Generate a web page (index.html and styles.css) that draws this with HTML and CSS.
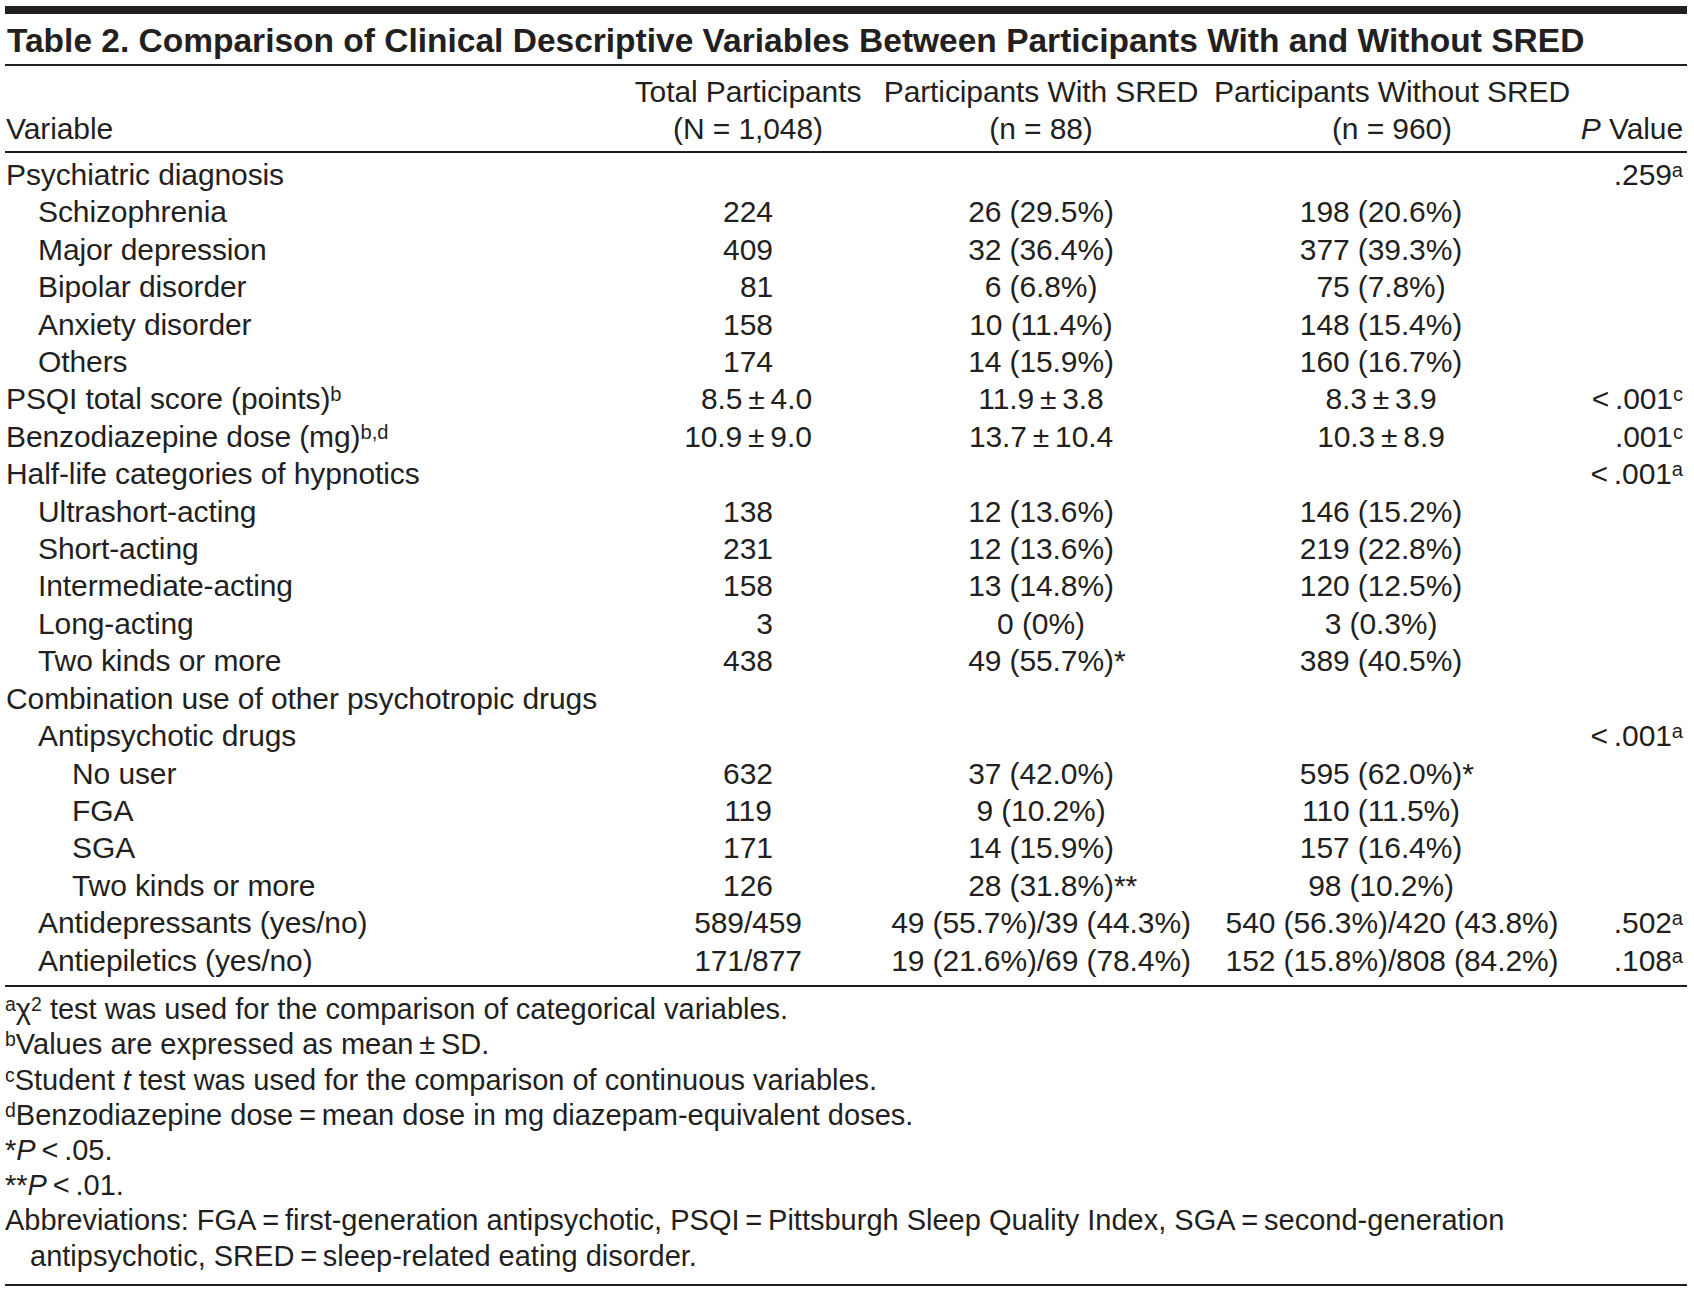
FILE: index.html
```html
<!DOCTYPE html>
<html lang="en">
<head>
<meta charset="utf-8">
<title>Table 2</title>
<link rel="stylesheet" href="styles.css">
</head>
<body>
<div class="page">
  <h1 class="title">Table 2. Comparison of Clinical Descriptive Variables Between Participants With and Without SRED</h1>
  <table class="data">
    <colgroup>
      <col class="w1"><col class="w2"><col class="w3"><col class="w4"><col class="w5">
    </colgroup>
    <thead>
      <tr>
        <th class="c1">Variable</th>
        <th>Total Participants<br>(N = 1,048)</th>
        <th>Participants With SRED<br>(n = 88)</th>
        <th>Participants Without SRED<br>(n = 960)</th>
        <th class="c5"><i>P</i> Value</th>
      </tr>
    </thead>
    <tbody>
      <tr><td class="c1">Psychiatric diagnosis</td><td></td><td></td><td></td><td class="c5">.259<sup>a</sup></td></tr>
      <tr><td class="c1 l1">Schizophrenia</td><td>224</td><td>26 (29.5%)</td><td class="s4">198 (20.6%)</td><td class="c5"></td></tr>
      <tr><td class="c1 l1">Major depression</td><td>409</td><td>32 (36.4%)</td><td class="s4">377 (39.3%)</td><td class="c5"></td></tr>
      <tr><td class="c1 l1">Bipolar disorder</td><td class="p1">81</td><td>6 (6.8%)</td><td class="s4">75 (7.8%)</td><td class="c5"></td></tr>
      <tr><td class="c1 l1">Anxiety disorder</td><td>158</td><td>10 (11.4%)</td><td class="s4">148 (15.4%)</td><td class="c5"></td></tr>
      <tr><td class="c1 l1">Others</td><td>174</td><td>14 (15.9%)</td><td class="s4">160 (16.7%)</td><td class="c5"></td></tr>
      <tr><td class="c1">PSQI total score (points)<sup>b</sup></td><td class="p1">8.5&#8201;±&#8201;4.0</td><td>11.9&#8201;±&#8201;3.8</td><td class="s4">8.3&#8201;±&#8201;3.9</td><td class="c5">&lt;&#8201;.001<sup>c</sup></td></tr>
      <tr><td class="c1">Benzodiazepine dose (mg)<sup>b,d</sup></td><td>10.9&#8201;±&#8201;9.0</td><td>13.7&#8201;±&#8201;10.4</td><td class="s4">10.3&#8201;±&#8201;8.9</td><td class="c5">.001<sup>c</sup></td></tr>
      <tr><td class="c1">Half-life categories of hypnotics</td><td></td><td></td><td></td><td class="c5">&lt;&#8201;.001<sup>a</sup></td></tr>
      <tr><td class="c1 l1">Ultrashort-acting</td><td>138</td><td>12 (13.6%)</td><td class="s4">146 (15.2%)</td><td class="c5"></td></tr>
      <tr><td class="c1 l1">Short-acting</td><td>231</td><td>12 (13.6%)</td><td class="s4">219 (22.8%)</td><td class="c5"></td></tr>
      <tr><td class="c1 l1">Intermediate-acting</td><td>158</td><td>13 (14.8%)</td><td class="s4">120 (12.5%)</td><td class="c5"></td></tr>
      <tr><td class="c1 l1">Long-acting</td><td class="p2">3</td><td>0 (0%)</td><td class="s4">3 (0.3%)</td><td class="c5"></td></tr>
      <tr><td class="c1 l1">Two kinds or more</td><td>438</td><td>49 (55.7%)<span class="ast">*</span></td><td class="s4">389 (40.5%)</td><td class="c5"></td></tr>
      <tr><td class="c1">Combination use of other psychotropic drugs</td><td></td><td></td><td></td><td class="c5"></td></tr>
      <tr><td class="c1 l1">Antipsychotic drugs</td><td></td><td></td><td></td><td class="c5">&lt;&#8201;.001<sup>a</sup></td></tr>
      <tr><td class="c1 l2">No user</td><td>632</td><td>37 (42.0%)</td><td class="s4">595 (62.0%)<span class="ast">*</span></td><td class="c5"></td></tr>
      <tr><td class="c1 l2">FGA</td><td>119</td><td>9 (10.2%)</td><td class="s4">110 (11.5%)</td><td class="c5"></td></tr>
      <tr><td class="c1 l2">SGA</td><td>171</td><td>14 (15.9%)</td><td class="s4">157 (16.4%)</td><td class="c5"></td></tr>
      <tr><td class="c1 l2">Two kinds or more</td><td>126</td><td>28 (31.8%)<span class="ast">**</span></td><td class="s4">98 (10.2%)</td><td class="c5"></td></tr>
      <tr><td class="c1 l1">Antidepressants (yes/no)</td><td>589/459</td><td>49 (55.7%)/39 (44.3%)</td><td>540 (56.3%)/420 (43.8%)</td><td class="c5">.502<sup>a</sup></td></tr>
      <tr><td class="c1 l1">Antiepiletics (yes/no)</td><td>171/877</td><td>19 (21.6%)/69 (78.4%)</td><td>152 (15.8%)/808 (84.2%)</td><td class="c5">.108<sup>a</sup></td></tr>
    </tbody>
  </table>
  <div class="notes">
    <p><sup>a</sup>χ<sup>2</sup> test was used for the comparison of categorical variables.</p>
    <p><sup>b</sup>Values are expressed as mean&#8201;±&#8201;SD.</p>
    <p><sup>c</sup>Student <i>t</i> test was used for the comparison of continuous variables.</p>
    <p><sup>d</sup>Benzodiazepine dose&#8201;=&#8201;mean dose in mg diazepam-equivalent doses.</p>
    <p>*<i>P</i>&#8201;&lt;&#8201;.05.</p>
    <p>**<i>P</i>&#8201;&lt;&#8201;.01.</p>
    <p class="hang">Abbreviations: FGA&#8201;=&#8201;first-generation antipsychotic, PSQI&#8201;=&#8201;Pittsburgh Sleep Quality Index, SGA&#8201;=&#8201;second-generation<br>antipsychotic, SRED&#8201;=&#8201;sleep-related eating disorder.</p>
  </div>
</div>
</body>
</html>
```
FILE: styles.css
```css
* { box-sizing: border-box; }
html, body { margin: 0; padding: 0; background: #ffffff; }
body {
  font-family: "Liberation Sans", Arial, sans-serif;
  color: #231f20;
}
.page {
  margin: 6px 0 0 5px;
  width: 1682px;
}
.title {
  margin: 0;
  font-size: 33.5px;
  font-weight: 700;
  line-height: 44px;
  letter-spacing: 0;
  white-space: nowrap;
  border-top: 8px solid #231f20;
  border-bottom: 2px solid #231f20;
  padding: 5px 0 1px 2px;
}
.data {
  width: 1682px;
  table-layout: fixed;
  border-collapse: separate;
  border-spacing: 0;
  font-size: 30px;
  line-height: 37.4px;
  letter-spacing: -0.1px;
}
.w1 { width: 615px; }
.w2 { width: 256px; }
.w3 { width: 330px; }
.w4 { width: 372px; }
.w5 { width: 109px; }
.data th,
.data td {
  padding: 0;
  font-weight: 400;
  text-align: center;
  white-space: nowrap;
  vertical-align: bottom;
}
.data thead th {
  padding-top: 6.6px;
  padding-bottom: 3.6px;
  border-bottom: 2px solid #231f20;
}
.data .c1 { text-align: left; padding-left: 1px; }
.data .c5 { text-align: right; padding-right: 4px; }
.data .l1 { padding-left: 33px; }
.data .l2 { padding-left: 67px; }
.data .p1 { padding-left: 17px; }
.data .p2 { padding-left: 33px; }
.data .s4 { padding-right: 22px; }
.data tbody tr:first-child td { padding-top: 3px; }
.data tbody tr:last-child td {
  padding-bottom: 6.2px;
  border-bottom: 2px solid #231f20;
}
.ast {
  display: inline-block;
  width: 0;
  text-align: left;
}
.page sup {
  font-size: 0.67em;
  line-height: 0;
  vertical-align: 0.4em;
  letter-spacing: 0;
}
.notes {
  font-size: 29px;
  line-height: 35.2px;
  letter-spacing: 0;
  padding: 5px 0 10px 0;
  border-bottom: 2px solid #231f20;
}
.notes p { margin: 0; }
.notes .hang {
  padding-left: 25px;
  text-indent: -25px;
}
```
